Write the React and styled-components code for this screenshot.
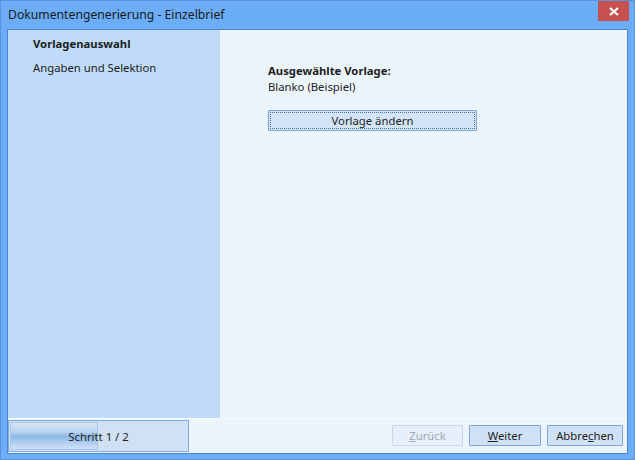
import React from 'react';
import styled, { createGlobalStyle } from 'styled-components';

const GlobalStyle = createGlobalStyle`
  html, body {
    margin: 0;
    padding: 0;
    background: #ffffff;
  }
  body {
    font-family: 'Noto Sans', 'Open Sans', sans-serif;
    font-size: 11.3px;
    color: #1e1e1e;
  }
`;

const Window = styled.div`
  box-sizing: border-box;
  width: 635px;
  height: 460px;
  background: #6badf6;
  border: 1px solid #5a93d6;
  display: flex;
  flex-direction: column;
`;

const TitleBar = styled.div`
  height: 28px;
  display: flex;
  align-items: flex-start;
  justify-content: space-between;
  padding-left: 7px;
`;

const Title = styled.div`
  font-size: 12.2px;
  line-height: 16px;
  margin-top: 6px;
  color: #1a1a1a;
`;

const CloseButton = styled.div`
  width: 31px;
  height: 20px;
  margin-right: 5px;
  background: #c75050;
  display: flex;
  align-items: center;
  justify-content: center;
`;

const Body = styled.div`
  margin: 0 6px;
  border: 1px solid #4f86c9;
  height: 423px;
  display: flex;
  flex-direction: column;
`;

const Content = styled.div`
  display: flex;
  height: 388px;
`;

const Sidebar = styled.div`
  width: 187px;
  background: #c0dbf7;
  padding: 6px 0 0 25px;
  display: flex;
  flex-direction: column;
  gap: 8px;
`;

const StepItem = styled.div`
  line-height: 16px;
  font-weight: ${(p) => (p.$active ? 700 : 400)};
`;

const Main = styled.div`
  flex: 1;
  background: #ebf3fb;
  padding: 33px 0 0 48px;
  display: flex;
  flex-direction: column;
  align-items: flex-start;
`;

const Label = styled.div`
  line-height: 16px;
  font-weight: ${(p) => (p.$bold ? 700 : 400)};
`;

const Button = styled.div`
  box-sizing: border-box;
  width: ${(p) => p.$w}px;
  height: 21px;
  border: 1px solid ${(p) => (p.$disabled ? '#c9d9eb' : '#7ea7d8')};
  background: ${(p) => (p.$disabled ? '#e6effa' : '#cfe1f5')};
  color: ${(p) => (p.$disabled ? '#a2aab4' : '#1e1e1e')};
  display: flex;
  align-items: center;
  justify-content: center;
  border-radius: 1px;
`;

const FocusButton = styled(Button)`
  margin-top: 15px;
  padding: 1px;
  background: #d3e4f6;
`;

const FocusRing = styled.div`
  box-sizing: border-box;
  width: 100%;
  height: 100%;
  border: 1px dotted #4d6f99;
  display: flex;
  align-items: center;
  justify-content: center;
  line-height: 15px;
`;

const Footer = styled.div`
  flex: 1;
  background: #ebf3fb;
  border-top: 1px solid #f7fbff;
  display: flex;
  align-items: flex-start;
  justify-content: space-between;
`;

const StepBox = styled.div`
  box-sizing: border-box;
  position: relative;
  width: 181px;
  height: 32px;
  margin-top: 1px;
  border: 1px solid #83aadb;
  background: #d0e1f4;
  padding: 1px;
  display: flex;
  align-items: center;
  justify-content: center;
`;

const Progress = styled.div`
  position: absolute;
  left: 1px;
  top: 1px;
  bottom: 1px;
  border: 1px solid #a9c6ea;
  background: linear-gradient(#d6e6f7 0%, #b7d2f0 35%, #8db7e4 50%, #a9c9ee 70%, #cfe1f6 100%);
`;

const StepText = styled.span`
  position: relative;
`;

const ButtonRow = styled.div`
  display: flex;
  gap: 6px;
  margin-top: 6px;
  margin-right: 4px;
`;

const U = styled.span`
  text-decoration: underline;
`;

export default function App() {
  const step = 1;
  const total = 2;
  return (
    <>
      <GlobalStyle />
      <Window>
        <TitleBar>
          <Title>Dokumentengenerierung - Einzelbrief</Title>
          <CloseButton>
            <svg width="10" height="9" viewBox="0 0 10 9">
              <path d="M1 1 L9 8 M9 1 L1 8" stroke="#ffffff" strokeWidth="2.2" />
            </svg>
          </CloseButton>
        </TitleBar>
        <Body>
          <Content>
            <Sidebar>
              <StepItem $active>Vorlagenauswahl</StepItem>
              <StepItem>Angaben und Selektion</StepItem>
            </Sidebar>
            <Main>
              <Label $bold>Ausgewählte Vorlage:</Label>
              <Label>Blanko (Beispiel)</Label>
              <FocusButton $w={209}>
                <FocusRing>Vorlage ändern</FocusRing>
              </FocusButton>
            </Main>
          </Content>
          <Footer>
            <StepBox>
              <Progress style={{ width: `${(step / total) * 100 - 2}%` }} />
              <StepText>Schritt {step} / {total}</StepText>
            </StepBox>
            <ButtonRow>
              <Button $w={71} $disabled><span><U>Z</U>urück</span></Button>
              <Button $w={72}><span><U>W</U>eiter</span></Button>
              <Button $w={76}><span>Abbre<U>c</U>hen</span></Button>
            </ButtonRow>
          </Footer>
        </Body>
      </Window>
    </>
  );
}
